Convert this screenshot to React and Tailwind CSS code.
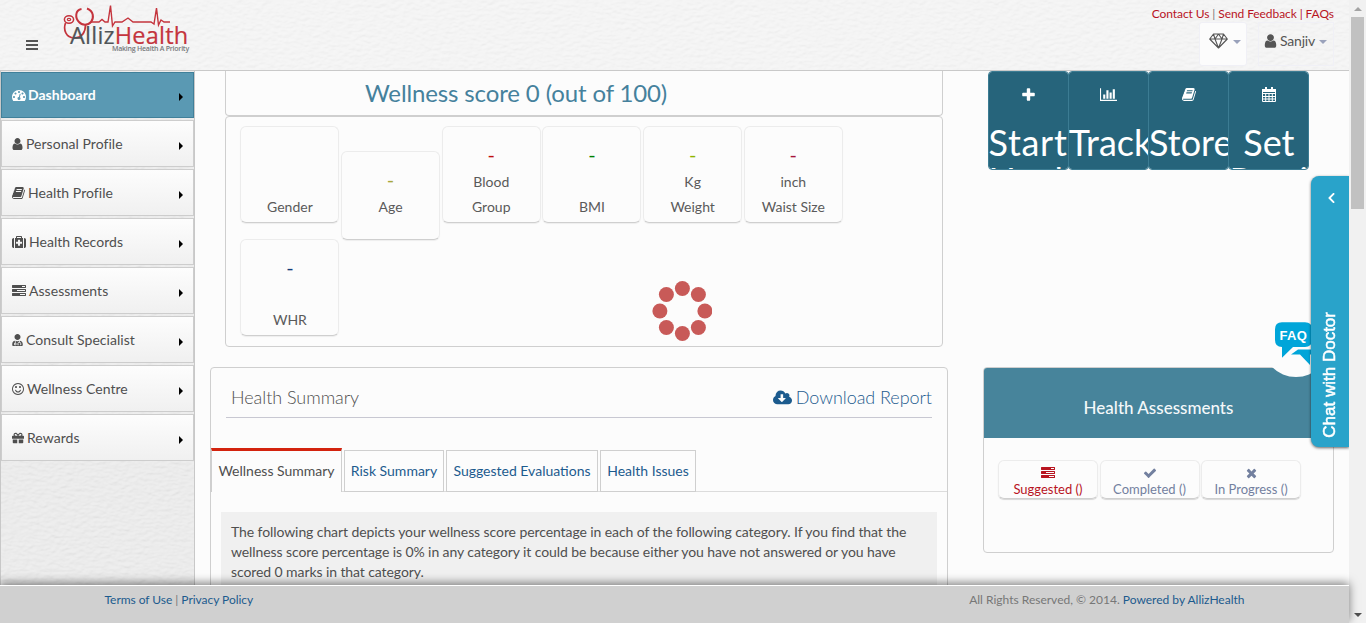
import React from "react";
import { FaUserMd, FaGift, FaChevronLeft } from "react-icons/fa";

const PATHS = {
  dashboard: ["0 0 1792 1792", "M384 1152q0-53-37.5-90.5t-90.5-37.5-90.5 37.5-37.5 90.5 37.5 90.5 90.5 37.5 90.5-37.5 37.5-90.5zm192-448q0-53-37.5-90.5t-90.5-37.5-90.5 37.5-37.5 90.5 37.5 90.5 90.5 37.5 90.5-37.5 37.5-90.5zm428 481l101-382q6-26-7.5-48.5t-38.5-29.5-48 6.5-30 39.5l-101 382q-60 5-107 43.5t-63 98.5q-20 77 20 146t117 89 146-20 89-117q16-60-6-117t-72-91zm660-33q0-53-37.5-90.5t-90.5-37.5-90.5 37.5-37.5 90.5 37.5 90.5 90.5 37.5 90.5-37.5 37.5-90.5zm-640-640q0-53-37.5-90.5t-90.5-37.5-90.5 37.5-37.5 90.5 37.5 90.5 90.5 37.5 90.5-37.5 37.5-90.5zm448 192q0-53-37.5-90.5t-90.5-37.5-90.5 37.5-37.5 90.5 37.5 90.5 90.5 37.5 90.5-37.5 37.5-90.5zm320 448q0 261-141 483-19 29-54 29h-1402q-35 0-54-29-141-221-141-483 0-182 71-348t191-286 286-191 348-71 348 71 286 191 191 286 71 348z"],
  user: ["256 0 1280 1792", "M1536 1399q0 109-62.5 187t-150.5 78h-854q-88 0-150.5-78t-62.5-187q0-85 8.5-160.5t31.5-152 58.5-131 94-89 134.5-34.5q131 128 313 128t313-128q76 0 134.5 34.5t94 89 58.5 131 31.5 152 8.5 160.5zm-256-887q0 159-112.5 271.5t-271.5 112.5-271.5-112.5-112.5-271.5 112.5-271.5 271.5-112.5 271.5 112.5 112.5 271.5z"],
  book: ["64 0 1664 1792", "M1703 478q40 57 18 129l-275 906q-19 64-76.5 107.5t-122.5 43.5h-923q-77 0-148.5-53.5t-99.5-131.5q-24-67-2-127 0-4 3-27t4-37q1-8-3-21.5t-3-19.5q2-11 8-21t16.5-23.5 16.5-23.5q23-38 45-91.5t30-91.5q3-10 .5-30t-.5-28q3-11 17-28t17-23q21-36 42-92t25-90q1-9-2.5-32t.5-28q4-13 22-30.5t22-22.5q19-26 42.5-84.5t27.5-96.5q1-8-3-25.5t-2-26.5q2-8 9-18t18-23 17-21q8-12 16.5-30.5t15-35 16-36 19.5-32 26.5-23.5 36-11.5 47.5 5.5l-1 3q38-9 51-9h761q74 0 114 56t18 130l-274 906q-36 119-71.5 153.5t-128.5 34.5h-869q-27 0-38 15-11 16-1 43 24 70 144 70h923q29 0 56-15.5t35-41.5l300-987q7-22 5-57 38 15 59 43zm-1064 2q-4 13 2 22.5t20 9.5h608q13 0 25.5-9.5t16.5-22.5l21-64q4-13-2-22.5t-20-9.5h-608q-13 0-25.5 9.5t-16.5 22.5zm-83 256q-4 13 2 22.5t20 9.5h608q13 0 25.5-9.5t16.5-22.5l21-64q4-13-2-22.5t-20-9.5h-608q-13 0-25.5 9.5t-16.5 22.5z"],
  medkit: ["0 0 1792 1792", "M1280 1088v-192q0-14-9-23t-23-9h-224v-224q0-14-9-23t-23-9h-192q-14 0-23 9t-9 23v224h-224q-14 0-23 9t-9 23v192q0 14 9 23t23 9h224v224q0 14 9 23t23 9h192q14 0 23-9t9-23v-224h224q14 0 23-9t9-23zm-640-704h512v-128h-512v128zm-384 0v1280h-32q-92 0-158-66t-66-158v-832q0-92 66-158t158-66h32zm1152 0v1280h-1024v-1280h128v-160q0-40 28-68t68-28h576q40 0 68 28t28 68v160h128zm384 224v832q0 92-66 158t-158 66h-32v-1280h32q92 0 158 66t66 158z"],
  tasks: ["0 0 1792 1792", "M1024 1408h640v-128h-640v128zm-384-512h1024v-128h-1024v128zm640-512h384v-128h-384v128zm512 832v256q0 26-19 45t-45 19h-1664q-26 0-45-19t-19-45v-256q0-26 19-45t45-19h1664q26 0 45 19t19 45zm0-512v256q0 26-19 45t-45 19h-1664q-26 0-45-19t-19-45v-256q0-26 19-45t45-19h1664q26 0 45 19t19 45zm0-512v256q0 26-19 45t-45 19h-1664q-26 0-45-19t-19-45v-256q0-26 19-45t45-19h1664q26 0 45 19t19 45z"],
  smile: ["128 0 1536 1792", "M1262 1075q-37 121-138 195t-228 74-228-74-138-195q-8-25 4-48.5t38-31.5q25-8 48.5 4t31.5 38q25 80 92.5 129.5t151.5 49.5 151.5-49.5 92.5-129.5q8-26 32-38t49-4 37 31.5 4 48.5zm-494-435q0 53-37.5 90.5t-90.5 37.5-90.5-37.5-37.5-90.5 37.5-90.5 90.5-37.5 90.5 37.5 37.5 90.5zm512 0q0 53-37.5 90.5t-90.5 37.5-90.5-37.5-37.5-90.5 37.5-90.5 90.5-37.5 90.5 37.5 37.5 90.5zm256 256q0-130-51-248.5t-136.5-204-204-136.5-248.5-51-248.5 51-204 136.5-136.5 204-51 248.5 51 248.5 136.5 204 204 136.5 248.5 51 248.5-51 204-136.5 136.5-204 51-248.5zm128 0q0 209-103 385.5t-279.5 279.5-385.5 103-385.5-103-279.5-279.5-103-385.5 103-385.5 279.5-279.5 385.5-103 385.5 103 279.5 279.5 103 385.5z"],
  chart: ["0 0 2048 1792", "M640 896v512h-256v-512h256zm384-512v1024h-256v-1024h256zm1024 1152v128h-2048v-1536h128v1408h1920zm-640-896v768h-256v-768h256zm384-384v1152h-256v-1152h256z"],
  plus: ["192 0 1408 1792", "M1600 736v192q0 40-28 68t-68 28h-416v416q0 40-28 68t-68 28h-192q-40 0-68-28t-28-68v-416h-416q-40 0-68-28t-28-68v-192q0-40 28-68t68-28h416v-416q0-40 28-68t68-28h192q40 0 68 28t28 68v416h416q40 0 68 28t28 68z"],
  cloud: ["0 0 1920 1792", "M1280 928q0-14-9-23t-23-9h-224v-352q0-13-9.5-22.5t-22.5-9.5h-192q-13 0-22.5 9.5t-9.5 22.5v352h-224q-13 0-22.5 9.5t-9.5 22.5q0 14 9 23l352 352q9 9 23 9t23-9l351-351q10-12 10-24zm640 224q0 159-112.5 271.5t-271.5 112.5h-1088q-185 0-316.5-131.5t-131.5-316.5q0-130 70-240t188-165q-2-30-2-43 0-212 150-362t362-150q156 0 285.5 87t188.5 231q71-62 166-62 106 0 181 75t75 181q0 76-41 138 130 31 213.5 135.5t83.5 238.5z"],
  check: ["0 0 1792 1792", "M1671 566q0 40-28 68l-724 724-136 136q-28 28-68 28t-68-28l-136-136-362-362q-28-28-28-68t28-68l136-136q28-28 68-28t68 28l294 295 656-657q28-28 68-28t68 28l136 136q28 28 28 68z"],
  times: ["192 0 1408 1792", "M1490 1322q0 40-28 68l-136 136q-28 28-68 28t-68-28l-294-294-294 294q-28 28-68 28t-68-28l-136-136q-28-28-28-68t28-68l294-294-294-294q-28-28-28-68t28-68l136-136q28-28 68-28t68 28l294 294 294-294q28-28 68-28t68 28l136 136q28 28 28 68t-28 68l-294 294 294 294q28 28 28 68z"],
};

function Icon({ name, className }) {
  const [box, d] = PATHS[name];
  return (
    <svg viewBox={box} className={className} fill="currentColor">
      <path d={d} />
    </svg>
  );
}

function CalendarIcon() {
  return (
    <svg viewBox="0 0 14 15" className="h-[15px] w-[14px]" fill="none" stroke="white">
      <path d="M.5 3v11.5h13V3M0 6.5h14M0 9.5h14M0 12h14M3.7 6v9M7 6v9M10.3 6v9" strokeWidth="1" />
      <path d="M0 2h14v3H0z" fill="white" stroke="none" />
      <path d="M4 0v4M10 0v4" strokeWidth="2" />
    </svg>
  );
}

function Paper({ id, strength }) {
  return (
    <svg className="pointer-events-none absolute inset-0 h-full w-full" aria-hidden="true">
      <filter id={id} x="0" y="0" width="100%" height="100%">
        <feTurbulence type="fractalNoise" baseFrequency="0.16 0.3" numOctaves="2" seed="4" />
        <feDiffuseLighting lightingColor="#ffffff" surfaceScale={strength}>
          <feDistantLight azimuth="70" elevation="68" />
        </feDiffuseLighting>
      </filter>
      <rect width="100%" height="100%" filter={`url(#${id})`} opacity="0.35" />
    </svg>
  );
}

function Logo() {
  return (
    <div className="relative ml-[25px] mt-[4px] h-[50px] w-[128px]">
      <svg viewBox="0 0 128 50" className="h-[50px] w-[128px]" fill="none" stroke="#c4343d">
        <ellipse cx="6" cy="15.500" rx="4.600" ry="3.800" strokeWidth="1.500" />
        <ellipse cx="6" cy="15.500" rx="1.700" ry="1.200" strokeWidth="1.200" />
        <path d="M2.500 19C0 26 3 33.500 11 34C19 34 22.500 28 22.500 21" strokeWidth="1.700" />
        <path d="M18.500 5C12 6 12 14 16 18C19 21.500 25 21.500 28 18C31 14 31 7 24 4.500" strokeWidth="2" />
        <path d="M28 18H36L39 15.500L42 18H45L47.500 1.500L49.500 22L52 18H59L65 14L70 18H88L91 20L93.500 4L95.500 21L98 16L101 18H107" strokeWidth="1.400" />
      </svg>
      <div className="absolute left-[7px] top-[17px] whitespace-nowrap font-['Open_Sans',sans-serif] text-[23.500px] font-medium leading-[28px] tracking-[0.220px] text-[#505558] [-webkit-text-stroke:0.2px]">
        Alliz<span className="text-[#c4343d]">Health</span>
      </div>
      <div className="absolute left-[49px] top-[40px] whitespace-nowrap font-['Open_Sans',sans-serif] text-[7px] font-semibold leading-[9px] tracking-[-0.230px] text-[#77797b]">
        Making Health A Priority
      </div>
    </div>
  );
}

const MENU = [
  ["Personal Profile", <Icon name="user" className="h-[14px] w-[11px]" />],
  ["Health Profile", <Icon name="book" className="h-[14px] w-[13px]" />],
  ["Health Records", <Icon name="medkit" className="h-[14px] w-[14px]" />],
  ["Assessments", <Icon name="tasks" className="h-[14px] w-[14px]" />],
  ["Consult Specialist", <FaUserMd className="h-[12px] w-[11px]" />],
  ["Wellness Centre", <Icon name="smile" className="h-[14px] w-[12px]" />],
  ["Rewards", <FaGift className="h-[12px] w-[12px]" />],
];

function Arrow() {
  return <span className="mr-[10px] mt-[4px] h-0 w-0 border-y-4 border-l-4 border-y-transparent border-l-black" />;
}

function Sidebar() {
  return (
    <nav className="relative h-[514px] w-[195px] shrink-0 border-x border-[#c8c8c8] bg-[#e6e6e6]">
      <Paper id="paper-side" strength="0.9" />
      <div className="relative flex flex-col gap-[2px] pt-px text-[14px] text-[#4f4f4f]">
        <div className="flex h-[46px] items-center gap-[2px] border border-[#40809a] bg-[#5a99b3] pb-px pl-[10px] font-bold text-white">
          <Icon name="dashboard" className="h-[14px] w-[14px]" />
          <span className="grow">Dashboard</span>
          <Arrow />
        </div>
        {MENU.map(([label, icon]) => (
          <div key={label} className="flex h-[47px] items-center gap-[3px] border border-[#cdcdcd] bg-linear-to-b from-[#fdfdfd] to-[#f0f0f0] pl-[10px]">
            {icon}
            <span className="grow tracking-[0.040px]">{label}</span>
            <Arrow />
          </div>
        ))}
      </div>
    </nav>
  );
}

function Stat({ value, color, unit, label, className }) {
  return (
    <div className={`flex w-[99px] flex-col items-center rounded-[6px] border border-[#ececec] border-b-[#cfcfcf] text-[14px] leading-[25px] text-[#5a5a5a] shadow-[0_1px_1px_rgba(0,0,0,0.06)] ${className}`}>
      <span className={`h-[25px] text-[20px] leading-[21px] ${color}`}>{value}</span>
      <span className="h-[25px]">{unit}</span>
      <span>{label}</span>
    </div>
  );
}

function Tile({ icon, lines, className }) {
  return (
    <div className="flex h-[97px] w-[79px] flex-col overflow-hidden rounded-[3px] bg-[#26647b] pt-[15px] text-white outline outline-[#3c7c93]">
      <div className="flex h-[15px] shrink-0 items-center justify-center">{icon}</div>
      <div className={`mt-[21px] text-[36px] leading-[38px] ${className}`}>
        {lines.map((line) => (
          <div key={line}>{line}</div>
        ))}
      </div>
    </div>
  );
}

function Tab({ children, className }) {
  return <div className={`flex h-[42px] items-center whitespace-nowrap border border-[#cfcfcf] pb-px text-[14px] text-[#1c5b8e] ${className}`}><span className="w-full text-center">{children}</span></div>;
}

function Assess({ icon, label, className }) {
  return (
    <div className={`flex h-[39px] flex-col items-center rounded-[6px] border border-[#ececec] border-b-[#cfcfcf] pt-[5px] text-[13px] leading-[17px] shadow-[0_1px_1px_rgba(0,0,0,0.15)] ${className}`}>
      {icon}
      <span className="mt-px whitespace-nowrap">{label}</span>
    </div>
  );
}

function Spinner() {
  const dots = [[30, 7.500], [46, 13.500], [52.500, 30], [46, 46.500], [30, 52.500], [14, 46.500], [7.500, 30], [14, 13.500]];
  return (
    <svg viewBox="0 0 60 60" className="absolute left-[652px] top-[281px] h-[60px] w-[60px]" fill="#c85a58">
      {dots.map(([x, y]) => (
        <circle key={`${x}-${y}`} cx={x + 0.4} cy={y} r="7.500" />
      ))}
    </svg>
  );
}

export default function App() {
  return (
    <div className="relative flex h-[623px] w-[1366px] overflow-hidden bg-[#fcfcfc] font-[Lato,sans-serif] text-[14px]">
      <div className="flex w-[1349px] shrink-0 flex-col">
        <header className="relative flex h-[71px] shrink-0 border-b border-[#c9c9c9] bg-[#f3f3f3]">
          <Paper id="paper-head" strength="0.7" />
          <div className="relative flex w-full">
            <div className="ml-[26px] mt-[40px] flex h-[10px] w-[12px] flex-col justify-between">
              <span className="h-[2px] bg-[#555]" />
              <span className="h-[2px] bg-[#555]" />
              <span className="h-[2px] bg-[#555]" />
            </div>
            <Logo />
            <div className="ml-auto flex flex-col items-end pr-[15px] pt-[6px]">
              <div className="whitespace-nowrap text-[12px] leading-[16px] tracking-[-0.080px] text-[#b8141f]">
                Contact Us <span className="text-[#777]">|</span> Send Feedback | FAQs
              </div>
              <div className="flex gap-[11px]">
                <div className="flex h-[44px] w-[48px] items-start gap-[5px] rounded-[3px] border border-[#f0f0f6] bg-[#fcfcfc] pl-[9px] pt-[10px]">
                  <svg viewBox="0 0 19 16" className="h-[16px] w-[19px]" fill="none" stroke="#555" strokeWidth="1.100" strokeLinejoin="round">
                    <path d="M4.500 1h10l3.800 5-8.800 9L.7 6zM.7 6h17.600M4.500 1L6 6l3.500 9L13 6l1.500-5M6 6l3.500-5L13 6" />
                  </svg>
                  <span className="mt-[7px] border-x-4 border-t-4 border-x-transparent border-t-[#9aa2bb]" />
                </div>
                <div className="flex h-[44px] w-[76px] items-start border border-[#f0f0f6] pl-[5px] pt-[9px] text-[14px] leading-[18px] text-[#555]">
                  <Icon name="user" className="mt-px h-[16px] w-[13px]" />
                  <span className="ml-[3px] tracking-[-0.200px]">Sanjiv</span>
                  <span className="ml-[4px] mt-[8px] border-x-4 border-t-4 border-x-transparent border-t-[#9aa2bb]" />
                </div>
              </div>
            </div>
          </div>
        </header>

        <div className="flex h-[514px] shrink-0 overflow-hidden">
          <Sidebar />
          <main className="flex grow">
            <div className="ml-[15px] flex w-[738px] shrink-0 flex-col">
              <section className="mx-[15px] mr-[5px] h-[45px] shrink-0 rounded-b-[4px] border border-t-0 border-[#cfcfcf] pl-[139px] text-[24px] leading-[44px] tracking-[-0.130px] text-[#45819c]">
                Wellness score 0 (out of 100)
              </section>
              <section className="ml-[15px] mr-[5px] h-[231px] shrink-0 rounded-[4px] border border-[#cfcfcf] pl-[14.400px] pt-[9px]">
                <div className="flex gap-[1.700px]">
                  <Stat label="Gender" className="h-[97px] pt-[17px]" />
                  <Stat value="-" color="text-[#a8a83c]" label="Age" className="mt-[25px] h-[89px] pt-[17px] [&>span:nth-child(2)]:h-0" />
                  <Stat value="-" color="text-[#c00d0d]" unit="Blood" label="Group" className="h-[97px] pt-[17px]" />
                  <Stat value="-" color="text-[#008000]" label="BMI" className="h-[97px] pt-[17px]" />
                  <Stat value="-" color="text-[#8fb400]" unit="Kg" label="Weight" className="h-[97px] pt-[17px]" />
                  <Stat value="-" color="text-[#a8143c]" unit="inch" label="Waist Size" className="h-[97px] pt-[17px]" />
                </div>
                <Stat value="-" color="text-[#143c78]" label="WHR" className="-mt-px h-[97px] pt-[17px]" />
              </section>
              <section className="mt-[20px] h-[300px] shrink-0 rounded-[4px] border border-[#cfcfcf]">
                <div className="mx-[15px] flex h-[50px] items-center justify-between border-b border-[#c8c8d2] pl-[5px] pt-[10px] text-[18px] font-light text-[#4f4f4f]">
                  <span className="tracking-[-0.050px]">Health Summary</span>
                  <span className="flex items-center gap-[4px] tracking-[-0.050px] text-[#1c5b8e]">
                    <Icon name="cloud" className="h-[18px] w-[19px]" />
                    Download Report
                  </span>
                </div>
                <div className="mt-[30px] flex items-end gap-[2px] border-b border-[#dcdcdc]">
                  <Tab className="-mb-px h-[44px]! w-[131px] border-t-3! border-b-0! border-t-[#d3230e]! bg-[#fcfcfc] pb-[3px]! text-[#4f4f4f]!">Wellness Summary</Tab>
                  <Tab className="-mb-px w-[100px]">Risk Summary</Tab>
                  <Tab className="-mb-px w-[152px]">Suggested Evaluations</Tab>
                  <Tab className="-mb-px w-[96px]">Health Issues</Tab>
                </div>
                <div className="ml-[10px] mr-[10px] mt-[20px] h-[100px] whitespace-nowrap bg-[#f0f0f0] px-[10px] pt-[10px] text-[14px] leading-[20px] tracking-[-0.088px] text-[#4f4f4f]">
                  The following chart depicts your wellness score percentage in each of the following category. If you find that the<br />
                  wellness score percentage is 0% in any category it could be because either you have not answered or you have<br />
                  scored 0 marks in that category.
                </div>
              </section>
            </div>
            <div className="ml-[35px] flex w-[351px] shrink-0 flex-col pt-px">
              <div className="ml-[5.500px] flex gap-[1.300px]">
                <Tile icon={<Icon name="plus" className="h-[16px] w-[13px]" />} lines={["Start", "Health"]} className="tracking-[0.700px]" />
                <Tile icon={<Icon name="chart" className="h-[15px] w-[17px]" />} lines={["Track"]} />
                <Tile icon={<Icon name="book" className="h-[15px] w-[14px]" />} lines={["Store"]} />
                <Tile icon={<CalendarIcon />} lines={["Set", "Reminders"]} className="[&>div:first-child]:text-center" />
              </div>
              <section className="mt-[198px] h-[186px] rounded-[4px] border border-[#cfcfcf]">
                <h2 className="flex h-[70px] items-center justify-center rounded-t-[3px] bg-[#47849b] pt-[10px] text-[17px] font-medium text-[#f4f8fa]">Health Assessments</h2>
                <div className="ml-[14px] mt-[22px] flex gap-[1.500px]">
                  <Assess icon={<Icon name="tasks" className="h-[14px] w-[14px]" />} label="Suggested ()" className="w-[100px] text-[#b8141f]" />
                  <Assess icon={<Icon name="check" className="h-[14px] w-[14px]" />} label="Completed ()" className="w-[100px] text-[#73809f]" />
                  <Assess icon={<Icon name="times" className="h-[14px] w-[11px]" />} label="In Progress ()" className="w-[100px] text-[#73809f]" />
                </div>
              </section>
            </div>
          </main>
        </div>

        <footer className="relative flex h-[38px] shrink-0 justify-between border-t border-white bg-[#d0d0d0] pl-[104.500px] pr-[104.500px] pt-[6px] text-[12px] leading-[16px] text-[#777] shadow-[0_-2px_9px_rgba(0,0,0,0.5)]">
          <div className="tracking-[-0.040px]"><span className="text-[#1c5b8e]">Terms of Use</span> | <span className="text-[#1c5b8e]">Privacy Policy</span></div>
          <div>All Rights Reserved, © 2014. <span className="text-[#1c5b8e]">Powered by AllizHealth</span></div>
        </footer>
      </div>

      <div className="flex w-[17px] shrink-0 flex-col items-center bg-[#f1f1f1]">
        <div className="flex h-[17px] items-center"><span className="border-x-4 border-b-4 border-x-transparent border-b-[#a3a3a3]" /></div>
        <div className="h-[192px] w-[13px] bg-[#c1c1c1]" />
        <div className="mt-auto flex h-[17px] items-center"><span className="border-x-4 border-t-4 border-x-transparent border-t-[#505050]" /></div>
      </div>

      <Spinner />

      <div className="absolute left-[1262px] top-[309px] h-[68px] w-[68px] rounded-full bg-[#fcfcfc]">
        <svg viewBox="0 0 68 68" className="h-[68px] w-[68px]" fill="#00a5d9">
          <path d="M29 45.500L36 40.500H52V45.500H48V56L38 45.500Z" />
          <path d="M20 13.300H43Q50 13.300 50 20.300V31Q50 38 43 38H31L20 48.700V38Q13 38 13 31V20.300Q13 13.300 20 13.300Z" />
        </svg>
        <span className="absolute left-[17.500px] top-[19px] font-['Liberation_Sans',sans-serif] text-[13px] font-bold leading-[16px] tracking-[0.3px] text-white">FAQ</span>
      </div>
      <div className="absolute left-[1311px] top-[176px] flex h-[271px] w-[38px] flex-col items-center justify-between rounded-l-[8px] bg-[#29a3ca] pt-[16px] pb-[9px] text-white shadow-[0_1px_3px_rgba(0,0,0,0.6)] [clip-path:inset(-5px_0_-5px_-5px)]">
        <FaChevronLeft className="ml-[3px] h-[12px] w-[9px]" />
        <span className="rotate-180 font-['Liberation_Sans',sans-serif] text-[17px] leading-[20px] [-webkit-text-stroke:0.5px_white] [writing-mode:vertical-rl]">Chat with Doctor</span>
      </div>
    </div>
  );
}
